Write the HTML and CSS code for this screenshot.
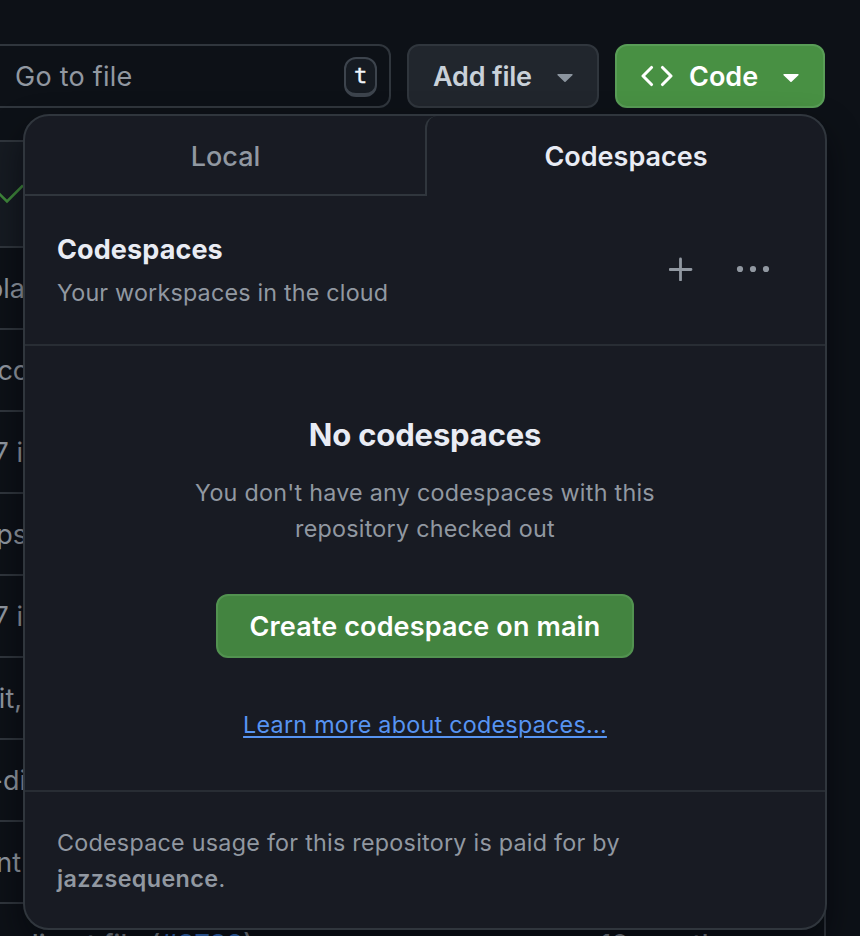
FILE: index.html
```html
<!DOCTYPE html>
<html lang="en">
<head>
<meta charset="utf-8">
<title>Codespaces</title>
<link rel="stylesheet" href="styles.css">
</head>
<body>
<div class="toolbar">
  <div class="search"><span class="go">Go to file</span><kbd>t</kbd></div>
  <button class="btn add"><span class="add-label">Add file</span><svg class="caret" width="16" height="8" viewBox="0 0 16 8"><path d="M1.2 0h13.6c.9 0 1.2.8.6 1.3L8.6 7.7a.9.9 0 0 1-1.2 0L.6 1.3C0 .8.300 0 1.2 0Z"/></svg></button>
  <button class="btn code"><svg width="32" height="32" viewBox="0 0 16 16"><path d="m11.28 3.22 4.25 4.25a.75.75 0 0 1 0 1.06l-4.25 4.25a.75.75 0 1 1-1.06-1.06L13.94 8l-3.72-3.72a.75.75 0 1 1 1.06-1.06Zm-6.56 0a.75.75 0 1 1 1.06 1.06L2.06 8l3.72 3.72a.75.75 0 1 1-1.06 1.06L.47 8.530a.75.75 0 0 1 0-1.06Z"/></svg><span class="code-label">Code</span><svg class="caret" width="16" height="8" viewBox="0 0 16 8"><path d="M1.2 0h13.6c.9 0 1.2.8.6 1.3L8.600 7.7a.9.9 0 0 1-1.2 0L.6 1.3C0 .8.300 0 1.2 0Z"/></svg></button>
</div>
<div class="files">
  <div class="head"><svg width="23" height="24" viewBox="0 0 23 24"><path d="M-1 11.500 7 19.500 23 3.500"/></svg></div>
  <div class="row"><span class="m w25">pla</span></div>
  <div class="row"><span class="m w29">co</span></div>
  <div class="row"><span class="m w23">7 i</span></div>
  <div class="row"><span class="m w27">ps</span></div>
  <div class="row"><span class="m w23">7 i</span></div>
  <div class="row"><span class="m w22">it,</span></div>
  <div class="row"><span class="m w26">-di</span></div>
  <div class="row"><span class="m w21">nt</span></div>
  <div class="row last"><span class="dir">direct file (<a>#8782</a>)</span><span class="ago">10 months ago</span></div>
</div>
<div class="popover">
  <div class="tabs"><div class="tab local"><span class="t-local">Local</span></div><div class="tab active"><span class="t-code">Codespaces</span></div></div>
  <div class="intro">
    <div class="titles"><h3>Codespaces</h3><p>Your workspaces in the cloud</p></div>
    <svg class="plus" width="24" height="24" viewBox="0 0 24 24"><path d="M11.500 2v21M1 12.500h21"/></svg>
    <svg class="dots" width="34" height="8" viewBox="0 0 34 8"><circle cx="4" cy="4" r="3.100"/><circle cx="17" cy="4" r="3.100"/><circle cx="30" cy="4" r="3.100"/></svg>
  </div>
  <div class="blank">
    <h2>No codespaces</h2>
    <p class="l1">You don't have any codespaces with this</p>
    <p class="l2">repository checked out</p>
    <button class="create"><span>Create codespace on main</span></button>
    <a class="learn">Learn more about codespaces...</a>
  </div>
  <div class="foot"><p class="f1">Codespace usage for this repository is paid for by</p><p class="f2"><b>jazzsequence</b>.</p></div>
</div>
</body>
</html>
```
FILE: styles.css
```css
* { box-sizing: border-box; }
html { height: 936px; overflow: hidden; background: #0d1117; }
body { margin: 0; width: 860px; height: 936px; overflow: hidden; position: relative; background: #0d1117; color: #9198a1; font-family: Inter, "Liberation Sans", sans-serif; font-size: 27px; }
h2, h3, p { margin: 0; }
span, p, h2, h3, a { white-space: nowrap; }
svg { display: block; flex: none; }
button { font: inherit; padding: 0; margin: 0; }
.toolbar { display: flex; height: 140px; padding-top: 44px; }
.search { width: 391px; height: 64px; border: 2px solid #30363d; border-left: 0; border-radius: 0 12px 12px 0; display: flex; align-items: center; justify-content: space-between; padding: 0 12px 0 15px; }
.go { letter-spacing: .25px; }
kbd { width: 33px; height: 40px; margin-top: 2px; border: 2px solid #3d444d; border-bottom-width: 4px; border-radius: 12px; background: #161b22; color: #f0f6fc; font: 22px/34px "DejaVu Sans Mono", monospace; text-align: center; -webkit-text-stroke: .4px #f0f6fc; }
.btn { height: 64px; border: 2px solid #30363d; border-radius: 12px; display: flex; align-items: center; }
.add { width: 192px; margin-left: 16px; padding: 0 24px; justify-content: space-between; background: #21262d; color: #c9d1d9; font-weight: 600; letter-spacing: -.2px; }
.add .caret { fill: #8b949e; }
.code { width: 210px; margin-left: 16px; padding: 0 24px; background: #489043; border-color: #599d57; color: #fff; font-weight: 600; }
.code svg { fill: #fff; }
.code-label { margin-left: 16px; }
.code .caret { margin-left: auto; }
.caret { position: relative; top: 2px; }
.files { width: 826px; border-top: 2px solid #30363d; border-right: 2px solid #30363d; }
.head { height: 106px; background: #161b22; border-bottom: 2px solid #30363d; display: flex; align-items: center; }
.head path { fill: none; stroke: #3f883b; stroke-width: 2.600; }
.row { height: 82px; border-bottom: 2px solid #30363d; display: flex; align-items: center; }
.m { display: flex; justify-content: flex-end; overflow: hidden; }
.w21 { width: 21px; } .w22 { width: 22px; } .w23 { width: 23px; } .w25 { width: 25px; } .w26 { width: 26px; } .w27 { width: 27px; } .w29 { width: 29px; }
.last { padding: 0 36px 0 22px; justify-content: space-between; font-weight: 500; }
.last a { color: #4184e4; }
.popover { position: absolute; left: 23px; top: 114px; width: 804px; height: 816px; border: 2px solid #30363d; border-radius: 26px; background: #181b23; box-shadow: 0 16px 32px rgba(1,4,9,.55); overflow: hidden; font-size: 23.300px; letter-spacing: .26px; }
.tabs { display: flex; height: 80px; font-size: 27px; letter-spacing: 0; }
.tab { display: flex; align-items: center; justify-content: center; line-height: 34px; padding-top: 2px; }
.local { width: 401px; padding-top: 4px; border-bottom: 2px solid #30363d; font-weight: 550; }
.active { width: 401px; height: 80px; margin-left: -1px; border-left: 2px solid #30363d; border-top-left-radius: 12px; color: #e9ecf4; font-weight: 600; }
.local { width: 402px; }
.intro { height: 150px; border-bottom: 2px solid #282d34; display: flex; padding: 34px 55px 0 32px; }
.titles { flex: 1; }
h3 { color: #e9ecf4; font-size: 27px; line-height: 40px; font-weight: 700; letter-spacing: .1px; }
.titles p { line-height: 36px; margin-top: 5px; letter-spacing: .2px; }
.plus { margin-top: 27px; fill: none; stroke: #9198a1; stroke-width: 2.800; stroke-linecap: round; }
.dots { margin: 35px 0 0 43px; fill: #9198a1; }
.blank { height: 446px; border-bottom: 2px solid #282d34; display: flex; flex-direction: column; align-items: center; padding-top: 65px; line-height: 36px; }
h2 { color: #e9ecf4; font-size: 31px; line-height: 48px; font-weight: 700; letter-spacing: -.15px; }
.l1 { margin-top: 16px; }
.create { width: 418px; height: 64px; margin-top: 47px; padding-top: 2px; border: 2px solid #529250; border-radius: 12px; background: #438440; color: #fff; font-size: 27px; font-weight: 600; line-height: 34px; letter-spacing: .12px; }
.learn { margin-top: 49px; color: #5794f2; text-decoration: underline; text-decoration-thickness: 2px; text-underline-offset: 3px; }
.foot { padding: 33px 32px; line-height: 36px; }
.f2 { letter-spacing: .4px; }
.f2 b { font-weight: 600; }
```
